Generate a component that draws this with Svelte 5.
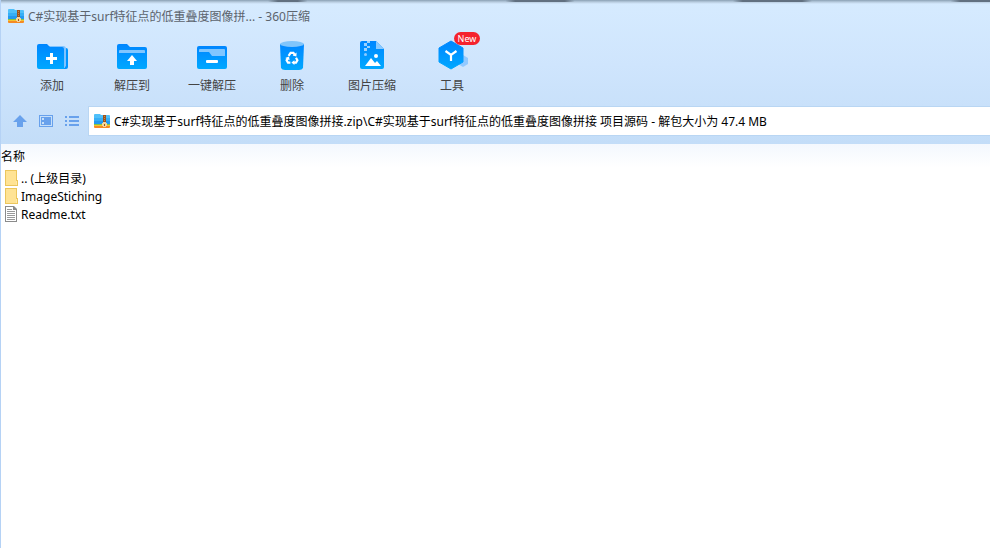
<script>
  const tools = [
    { id: "add", label: "添加" },
    { id: "extract", label: "解压到" },
    { id: "quick", label: "一键解压" },
    { id: "delete", label: "删除" },
    { id: "image", label: "图片压缩" },
    { id: "tools", label: "工具", badge: "New" },
  ]

  const files = [
    { name: ".. (上级目录)", type: "folder" },
    { name: "ImageStiching", type: "folder" },
    { name: "Readme.txt", type: "text" },
  ]

  let path = $state("C#实现基于surf特征点的低重叠度图像拼接.zip\\C#实现基于surf特征点的低重叠度图像拼接 项目源码 - 解包大小为 47.4 MB")
</script>

{#snippet archiveIcon()}
  <svg width="16" height="16" viewBox="0 0 16 16" aria-hidden="true">
    <path d="M0 2q0-1 1-1h5l1 1h8q1 0 1 1v8H0z" fill="#4fc0fa" />
    <path d="M0 5h16v3H0z" fill="#36aff6" />
    <path d="M0 8h16v3H0z" fill="#2399f0" />
    <path d="M0 11h16v1H0z" fill="#86c440" />
    <path d="M0 12h16v1H0z" fill="#f3c62f" />
    <path d="M0 13h16v1q0 1-1 1H1q-1 0-1-1z" fill="#f58a25" />
    <path d="M9 2h3v12H9z" fill="#9a531f" />
    <path d="M10 3h1v1h-1zM10 5h1v1h-1zM10 7h1v1h-1z" fill="#c98342" />
    <path fill-rule="evenodd" d="M9 9h3v1h1v3h-1v1H9v-1H8v-3h1zM10 11v2h1v-2z" fill="#f6d59a" />
  </svg>
{/snippet}

<main>
  <header>
    <div class="title">
      {@render archiveIcon()}
      <span>C#实现基于surf特征点的低重叠度图像拼... - 360压缩</span>
    </div>

    <nav class="toolbar">
      {#each tools as tool}
        <button class="tool">
          <svg width="34" height="34" viewBox="0 0 34 34" aria-hidden="true">
            <defs>
              <linearGradient id="fill-{tool.id}" x1="0" y1="0" x2="0" y2="1">
                <stop offset="0" stop-color="#0086ff" />
                <stop offset="1" stop-color="#00a8ff" />
              </linearGradient>
            </defs>
            {#if tool.id === "add"}
              <path d="M14 6h14q3 0 3 3v18H14z" fill="#80c3ff" />
              <path d="M31 8q2 0 2 2v17q0 2-2 2h-3l3-3z" fill="#0095ff" />
              <path d="M2 6q0-2 2-2h8l3 3h12q2 0 2 2v20H4q-2 0-2-2z" fill="url(#fill-add)" />
              <path d="M15 13h3v4h4v3h-4v4h-3v-4h-4v-3h4z" fill="#fff" />
            {:else if tool.id === "extract"}
              <path d="M2 6q0-2 2-2h8l3 3h15q2 0 2 2v18q0 2-2 2H4q-2 0-2-2z" fill="url(#fill-extract)" />
              <path d="M4 11q0-1 1-1h24q1 0 1 1v2H4z" fill="#80c6ff" />
              <path d="M17 15l5 6h-3v4h-4v-4h-3z" fill="#fff" />
            {:else if tool.id === "quick"}
              <rect x="2" y="6" width="30" height="23" rx="2" fill="url(#fill-quick)" />
              <path d="M4 10q0-1 1-1h24q1 0 1 1v6H17l-3-4H4z" fill="#80c6ff" />
              <rect x="11" y="20" width="12" height="3" rx="1" fill="#fff" />
            {:else if tool.id === "delete"}
              <path d="M5 4h24l-1 24q-1 2-4 2H10q-3 0-4-2z" fill="url(#fill-delete)" />
              <ellipse cx="17" cy="4" rx="12" ry="3" fill="#80c5fb" />
              <g fill="none" stroke="#fff" stroke-width="2.2">
                <path d="M13.6 15.8l2-3h2.8l1.2 2" />
                <path d="M21 17.8l1.4 2.4-1.4 2.4h-2" />
                <path d="M15.4 22.6H13l-1.4-2.4 1.2-2" />
              </g>
              <path d="M17.6 15.6l3.8.8.2-4zM19.4 20.2v4.8l-3-2.4zM10.2 18l3.8-1.6.6 3.8z" fill="#fff" />
            {:else if tool.id === "image"}
              <path d="M5 3q0-2 2-2h14l8 8v18q0 2-2 2H7q-2 0-2-2z" fill="url(#fill-image)" />
              <path d="M21 1l8 8h-8z" fill="#8bcaff" />
              <path d="M12 1h3v2h-3zM9 3h3v3H9zM12 6h3v2h-3zM9 8h3v3H9z" fill="#9bd1ff" />
              <circle cx="10.5" cy="14.5" r="1.5" fill="#8ccaff" />
              <circle cx="21" cy="16" r="2" fill="#fff" />
              <path d="M10 26l6-8 4 5 2-2 4 5z" fill="#fff" />
            {:else}
              <path d="M28 15l5 3v6l-5 3-5-3v-6z" fill="#92c9ff" />
              <path d="M16 1l12 7v14l-12 7-12-7V8z" fill="url(#fill-tools)" stroke="url(#fill-tools)" stroke-linejoin="round" />
              <path d="M10.5 11l5.5 4 5.5-4M16 15v6" fill="none" stroke="#fff" stroke-width="2.2" />
            {/if}
          </svg>
          <span>{tool.label}</span>
          {#if tool.badge}
            <em class="badge">{tool.badge}</em>
          {/if}
        </button>
      {/each}
    </nav>

    <div class="address">
      <button class="nav" aria-label="上级目录">
        <svg width="14" height="14" viewBox="0 0 14 14"><path d="M7 1l7 7h-4v5H4V8H0z" /></svg>
      </button>
      <button class="nav" aria-label="预览">
        <svg width="14" height="14" viewBox="0 0 14 14">
          <path fill-rule="evenodd" d="M0 1h14v12H0zM1 2v10h12V2z" />
          <path fill-rule="evenodd" d="M2 3h10v8H2zM3 4v2h2V4zM3 8v2h2V8z" />
        </svg>
      </button>
      <button class="nav" aria-label="列表">
        <svg width="14" height="14" viewBox="0 0 14 14">
          <path d="M0 2h2v2H0zM0 6h2v2H0zM0 10h2v2H0zM4 2h10v2H4zM4 6h10v2H4zM4 10h10v2H4z" />
        </svg>
      </button>
      <label class="path">
        {@render archiveIcon()}
        <input type="text" aria-label="路径" bind:value={path} />
      </label>
    </div>
  </header>

  <table>
    <thead>
      <tr><th>名称</th></tr>
    </thead>
    <tbody>
      {#each files as file}
        <tr>
          <td>
            <div class="file">
              {#if file.type === "folder"}
                <svg width="14" height="16" viewBox="0 0 14 16" aria-hidden="true">
                  <path d="M0 0h12v10h1v6H0z" fill="#ecc65c" />
                  <path d="M1 1h10v14H1z" fill="#ffe394" />
                  <path d="M11 11h1v4h-1z" fill="#ffe9a9" />
                </svg>
              {:else}
                <svg width="14" height="16" viewBox="0 0 14 16" aria-hidden="true">
                  <path d="M0 0h9l3 3v13H0z" fill="#8b8b8b" />
                  <path d="M1 1h7v3h3v11H1z" fill="#fff" />
                  <path d="M2 3h5v1H2zM2 5h8v1H2zM2 7h8v1H2zM2 9h8v1H2zM2 11h8v1H2zM2 13h8v1H2z" fill="#999" />
                </svg>
              {/if}
              <span>{file.name}</span>
            </div>
          </td>
        </tr>
      {/each}
    </tbody>
  </table>
</main>

<style>
  :global(body) {
    margin: 0;
    background: #fff;
  }

  main {
    box-sizing: border-box;
    min-height: 100vh;
    border-left: 1px solid #b5d2f5;
    font-family: "Noto Sans", "Noto Sans CJK SC", sans-serif;
    font-size: 12px;
    line-height: 18px;
    color: #000;
  }

  header {
    background:
      linear-gradient(90deg, transparent 27%, #617080 28%, #617080 30%, transparent 31%, transparent 51%, #617080 52%, #617080 57%, transparent 58%, transparent 74%, #617080 75%, #617080 81%, transparent 82%, transparent 96%, #617080 97%) 0 0 / 100% 2px no-repeat,
      linear-gradient(#8aa0b4, #b8ccdf 50%, #d6eaff00) 0 0 / 100% 4px no-repeat,
      linear-gradient(#d6ebff, #cfe5fd 45%, #c3ddf8);
  }

  svg {
    display: block;
    flex: none;
  }

  button {
    padding: 0;
    border: none;
    background: none;
    font: inherit;
    color: inherit;
    cursor: pointer;
  }

  .title {
    display: flex;
    align-items: center;
    gap: 4px;
    height: 32px;
    padding-left: 7px;
    color: #5c646d;
  }

  .title span,
  .file span {
    padding-top: 2px;
  }

  .toolbar {
    display: flex;
    height: 74px;
    padding-left: 11px;
  }

  .tool {
    position: relative;
    display: flex;
    flex-direction: column;
    align-items: center;
    gap: 3px;
    width: 80px;
    padding-top: 8px;
    color: #444;
  }

  .badge {
    position: absolute;
    top: 0;
    left: 42px;
    width: 26px;
    border-radius: 7px;
    background: #f5222d;
    color: #fff;
    font-size: 9px;
    font-style: normal;
    line-height: 13px;
    text-align: center;
  }

  .address {
    display: flex;
    align-items: center;
    gap: 12px;
    padding: 0 0 8px 12px;
  }

  .nav svg {
    fill: #68a1ec;
  }

  .path {
    display: flex;
    flex: 1;
    align-items: center;
    gap: 4px;
    height: 28px;
    margin-left: -3px;
    padding-left: 5px;
    border: 1px solid #b9d6f3;
    border-right: none;
    background: #fff;
  }

  .path input {
    flex: 1;
    min-width: 0;
    padding: 2px 0 0;
    border: none;
    outline: none;
    background: none;
    font: inherit;
    color: inherit;
  }

  table {
    width: 100%;
    border-collapse: collapse;
    background: linear-gradient(#f3f8fe, #fff) 0 0 / 100% 24px no-repeat;
  }

  th {
    height: 25px;
    padding: 0;
    font-weight: normal;
    text-align: left;
  }

  td {
    padding: 0 0 0 4px;
  }

  .file {
    display: flex;
    align-items: center;
    gap: 2px;
    height: 18px;
  }
</style>
